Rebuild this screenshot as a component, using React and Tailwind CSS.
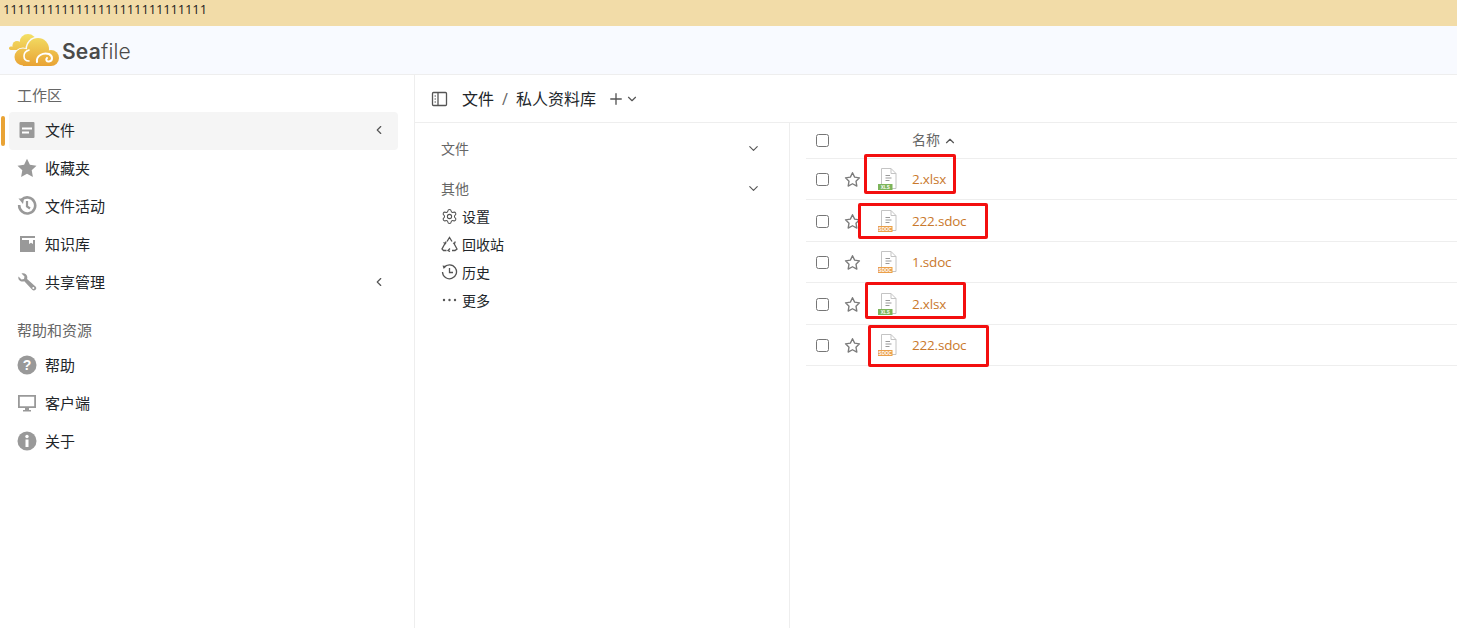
import React from "react";
import { ChevronDown, ChevronUp, ChevronLeft, Plus, Settings } from "lucide-react";

const font = "font-['Open_Sans','Noto_Sans_CJK_SC',sans-serif]";

function Logo() {
  return (
    <svg width="52" height="34" viewBox="0 0 52 34" className="shrink-0">
      <defs>
        <linearGradient id="lg" gradientUnits="userSpaceOnUse" x1="0" y1="1" x2="0" y2="33">
          <stop offset="0" stopColor="#f3e066" />
          <stop offset="1" stopColor="#e9a334" />
        </linearGradient>
      </defs>
      <g fill="url(#lg)">
        <circle cx="20" cy="9.500" r="8.500" />
        <circle cx="9" cy="12.500" r="4.500" />
        <rect x="1" y="13.500" width="24" height="3.500" rx="1.700" />
      </g>
      <g fill="#f8faff">
        <circle cx="30" cy="16" r="12.500" />
        <circle cx="15" cy="24" r="9.500" />
        <circle cx="43" cy="25" r="9.500" />
      </g>
      <g fill="url(#lg)">
        <circle cx="30" cy="16" r="11" />
        <circle cx="15" cy="24" r="8.500" />
        <circle cx="43" cy="25" r="8" />
        <rect x="15" y="22" width="28" height="11" />
      </g>
      <path fill="none" stroke="#fff" strokeWidth="2" strokeLinecap="round" d="M29 29c-1-6 6-10 12-8 4 2 4 7 0 7.500-2.500.3-3.500-2-2-3.500" />
      <path fill="none" stroke="#fff" strokeWidth="1.600" strokeLinecap="round" d="M21 17c-3 1-5 3-5 6 0 3 2 5 5 5" />
    </svg>
  );
}

function SideIcon({ name }) {
  const c = "#999999";
  const p = { width: 20, height: 20, viewBox: "0 0 20 20", className: "shrink-0" };
  if (name === "file")
    return (
      <svg {...p}>
        <rect x="2.500" y="2" width="15" height="16" rx="1" fill={c} />
        <rect x="5" y="7.500" width="10" height="2" fill="#fff" />
        <rect x="5" y="11.500" width="7" height="2" fill="#fff" />
      </svg>
    );
  if (name === "star")
    return (
      <svg {...p}>
        <path fill={c} d="M10 .8l2.900 6 6.600.9-4.800 4.600 1.200 6.600L10 15.700l-5.900 3.200 1.200-6.600L.5 7.700l6.600-.9z" />
      </svg>
    );
  if (name === "activity")
    return (
      <svg {...p}>
        <path fill="none" stroke={c} strokeWidth="2.600" d="M4.500 3.800A8 8 0 1 1 2.200 9" />
        <path fill={c} d="M1.500 2.500l5.500.2-1 5.200z" />
        <path fill="none" stroke={c} strokeWidth="2.200" d="M10 5v5.500l3 2" />
      </svg>
    );
  if (name === "library")
    return (
      <svg {...p}>
        <path fill={c} d="M3 2h15v16H3z" />
        <path fill="#fff" d="M5 4h13v2H5zM12 6h4v4l-2-1.300-2 1.300z" />
      </svg>
    );
  if (name === "wrench")
    return (
      <svg {...p}>
        <path fill={c} d="M1.500 4.500L4.500 7.500 7 7l.5-2.500L4.500 1.500C7 .5 10 2 10.300 5c0 .7 0 1.300-.2 1.900l8.400 7.600c1 1 1 2.400 0 3.300-1 1-2.300 1-3.300 0L7.300 9.300C4 10.300.5 8 1.500 4.500z" />
        <circle cx="16.300" cy="16" r="1" fill="#fff" />
      </svg>
    );
  if (name === "help")
    return (
      <svg {...p}>
        <circle cx="10" cy="10" r="9.500" fill={c} />
        <text x="10" y="15" textAnchor="middle" fontSize="14" fontWeight="700" fill="#fff" fontFamily="Liberation Sans">?</text>
      </svg>
    );
  if (name === "client")
    return (
      <svg {...p}>
        <path fill={c} d="M1 2h18v13H12v2h2v1.500H6V17h2v-2H1zm1.800 1.800v9.400h14.400V3.800z" />
      </svg>
    );
  return (
    <svg {...p}>
      <circle cx="10" cy="10" r="9.500" fill={c} />
      <circle cx="10" cy="5.500" r="1.700" fill="#fff" />
      <rect x="8.500" y="8.500" width="3" height="7.500" fill="#fff" />
    </svg>
  );
}

function NavItem({ icon, label, chevron, active }) {
  return (
    <div className="relative h-[38px]">
      {active && <div className="absolute left-[1px] top-[4px] h-[30px] w-[4px] rounded-[2px] bg-[#e9a335]" />}
      <div className={`ml-[9px] mr-[16px] h-[38px] flex items-center pl-[8px] pr-[12px] pb-[2px] rounded-[4px] ${active ? "bg-[#f5f5f5]" : ""}`}>
        <SideIcon name={icon} />
        <span className="ml-[8px] text-[15px] text-[#212529] flex-1">{label}</span>
        {chevron && <ChevronLeft size={14} strokeWidth={2} className="text-[#555]" />}
      </div>
    </div>
  );
}

function TreeIcon({ kind }) {
  const s = { fill: "none", stroke: "#555", strokeWidth: 1.3 };
  if (kind === "settings") return <Settings size={17} strokeWidth={1.500} className="text-[#555] shrink-0" />;
  if (kind === "trash")
    return (
      <svg width="17" height="16" viewBox="0 0 17 16" className="shrink-0">
        <path {...s} d="M6 5.500L8.500 1.500 11 5.500M13 7.500l3 5.500-2 1.500h-3M5.500 14.500H2.500L1 13l3-5.500M9 12.500l-2 2 2 1M2.500 6.500L4.500 7.500 5 5.500M12 7l1.500.5.800-2" />
      </svg>
    );
  if (kind === "history")
    return (
      <svg width="17" height="16" viewBox="0 0 16 16" className="shrink-0">
        <path {...s} d="M2.500 3.500A7 7 0 1 1 1 8" />
        <path fill="#555" d="M1 1.500l4 .5-2.800 3z" />
        <path {...s} d="M8 4v4.500h3.500" />
      </svg>
    );
  return (
    <svg width="17" height="16" viewBox="0 0 16 16" className="shrink-0">
      <circle cx="2.500" cy="8" r="1.200" fill="#555" />
      <circle cx="8" cy="8" r="1.200" fill="#555" />
      <circle cx="13.500" cy="8" r="1.200" fill="#555" />
    </svg>
  );
}

function TreeRow({ kind, label }) {
  return (
    <div className="h-[28px] flex items-center pl-[26px]">
      <TreeIcon kind={kind} />
      <span className="ml-[4px] text-[14px] text-[#212529]">{label}</span>
    </div>
  );
}

function FileIcon({ type }) {
  const xls = type === "xls";
  return (
    <svg width="22" height="24" viewBox="0 0 22 24" className="shrink-0">
      <path fill="#fff" stroke="#c4c4c4" strokeWidth="1" d="M4.500 1.500h9.500l5 5v15h-14.500z" />
      <path fill="none" stroke="#c4c4c4" strokeWidth="1" d="M14 1.500v5h5" />
      <path stroke="#9a9a9a" strokeWidth="1" d="M8.500 8.500h4.500M8.500 11h6M8.500 13.500h4" />
      <rect x="1" y="17" width="14.500" height="6" fill={xls ? "#7cb45a" : "#eba04a"} />
      <text x="8.250" y="21.700" textAnchor="middle" fontSize="4.600" fontWeight="700" fill="#fff" fontFamily="Liberation Sans">{xls ? "XLS" : "SDOC"}</text>
    </svg>
  );
}

function StarOutline() {
  return (
    <svg width="17" height="17" viewBox="0 0 20 20" className="shrink-0">
      <path fill="none" stroke="#7b7b7b" strokeWidth="1.600" strokeLinejoin="round" d="M10 2l2.500 5.200 5.700.8-4.100 4 1 5.700L10 15l-5.100 2.700 1-5.700-4.100-4 5.700-.8z" />
    </svg>
  );
}

function Checkbox() {
  return <div className="w-[13px] h-[13px] rounded-[2.500px] border border-[#767676] bg-white shrink-0" />;
}

function FileRow({ name, type, h, box }) {
  return (
    <div className={`relative flex items-center border-b border-[#eeeeee] ${h}`}>
      <div className="w-[33px] pl-[10px] shrink-0"><Checkbox /></div>
      <div className="w-[32px] shrink-0 pl-[5px]"><StarOutline /></div>
      <div className="w-[41px] shrink-0 pl-[6px]"><FileIcon type={type} /></div>
      <span className="text-[13.500px] tracking-[-0.200px] text-[#c9792c]">{name}</span>
      <div className={`absolute border-[3px] border-[#f30f0f] rounded-[2px] pointer-events-none ${box}`} />
    </div>
  );
}

export default function App() {
  return (
    <div className={`h-[628px] w-[1457px] overflow-hidden flex flex-col bg-white ${font}`}>
      <div className="h-[26px] bg-[#f2dca8] text-[13px] leading-[18px] pl-[3px] text-[#222] tracking-[-0.150px] shrink-0">
        1111111111111111111111111111
      </div>
      <div className="h-[49px] bg-[#f8faff] border-b border-[#eeeeee] flex items-center pl-[8px] shrink-0">
        <Logo />
        <span className="ml-[2px] mt-[2px] text-[21px] leading-none text-[#4a4a4a] font-['Inter',sans-serif] tracking-[0.200px]">
          <span className="font-semibold">Sea</span><span className="font-light">file</span>
        </span>
      </div>
      <div className="flex flex-1 min-h-0">
        <aside className="w-[415px] border-r border-[#eeeeee] shrink-0 flex flex-col">
          <div className="h-[37px] pl-[17px] pt-[10px] text-[15px] leading-[20px] text-[#666666]">工作区</div>
          <NavItem icon="file" label="文件" chevron active />
          <NavItem icon="star" label="收藏夹" />
          <NavItem icon="activity" label="文件活动" />
          <NavItem icon="library" label="知识库" />
          <NavItem icon="wrench" label="共享管理" chevron />
          <div className="h-[45px] pl-[17px] pt-[18px] text-[15px] leading-[20px] text-[#666666]">帮助和资源</div>
          <NavItem icon="help" label="帮助" />
          <NavItem icon="client" label="客户端" />
          <NavItem icon="info" label="关于" />
        </aside>
        <main className="flex-1 flex flex-col min-w-0">
          <div className="h-[48px] border-b border-[#eeeeee] flex items-center pl-[16px] shrink-0">
            <svg width="17" height="16" viewBox="0 0 17 16" className="shrink-0">
              <rect x="1.500" y="1.500" width="14" height="13" rx="1" fill="none" stroke="#555" strokeWidth="1.300" />
              <path d="M7 1.500v13" stroke="#555" strokeWidth="1.300" />
              <path d="M3.500 5h1.500M3.500 8h1.500M3.500 11h1.500" stroke="#555" strokeWidth="1.200" />
            </svg>
            <span className="ml-[14px] text-[16px] text-[#212529]">文件</span>
            <span className="ml-[8px] mr-[8px] text-[16px] text-[#666]">/</span>
            <span className="text-[16px] text-[#212529]">私人资料库</span>
            <Plus size={18} strokeWidth={1.800} className="ml-[11px] text-[#555]" />
            <ChevronDown size={14} strokeWidth={2} className="text-[#555]" />
          </div>
          <div className="flex flex-1 min-h-0">
            <div className="w-[375px] border-r border-[#eeeeee] shrink-0 pt-[5px]">
              <div className="h-[40px] flex items-center pl-[26px] pr-[28px] justify-between text-[14px] text-[#666]">
                <span>文件</span>
                <ChevronDown size={15} strokeWidth={1.800} className="text-[#555]" />
              </div>
              <div className="h-[40px] flex items-center pl-[26px] pr-[28px] justify-between text-[14px] text-[#666]">
                <span>其他</span>
                <ChevronDown size={15} strokeWidth={1.800} className="text-[#555]" />
              </div>
              <div className="-mt-[6px]">
                <TreeRow kind="settings" label="设置" />
                <TreeRow kind="trash" label="回收站" />
                <TreeRow kind="history" label="历史" />
                <TreeRow kind="more" label="更多" />
              </div>
            </div>
            <div className="flex-1 pl-[16px] min-w-0">
              <div className="h-[36px] flex items-center border-b border-[#eeeeee]">
                <div className="w-[106px] pl-[10px] shrink-0"><Checkbox /></div>
                <span className="text-[14px] text-[#666] -mt-[2px]">名称</span>
                <ChevronUp size={14} strokeWidth={2} className="ml-[3px] text-[#555]" />
              </div>
              <FileRow name="2.xlsx" type="xls" h="h-[41px]" box="left-[58px] top-[-5px] w-[92px] h-[40px]" />
              <FileRow name="222.sdoc" type="sdoc" h="h-[42px] pt-[1px]" box="left-[52px] top-[3px] w-[130px] h-[36px]" />
              <FileRow name="1.sdoc" type="sdoc" h="h-[41px]" box="hidden" />
              <FileRow name="2.xlsx" type="xls" h="h-[42px] pt-[1px]" box="left-[59px] top-[-1px] w-[101px] h-[37px]" />
              <FileRow name="222.sdoc" type="sdoc" h="h-[41px]" box="left-[62px] top-[0px] w-[121px] h-[42px]" />
            </div>
          </div>
        </main>
      </div>
    </div>
  );
}
